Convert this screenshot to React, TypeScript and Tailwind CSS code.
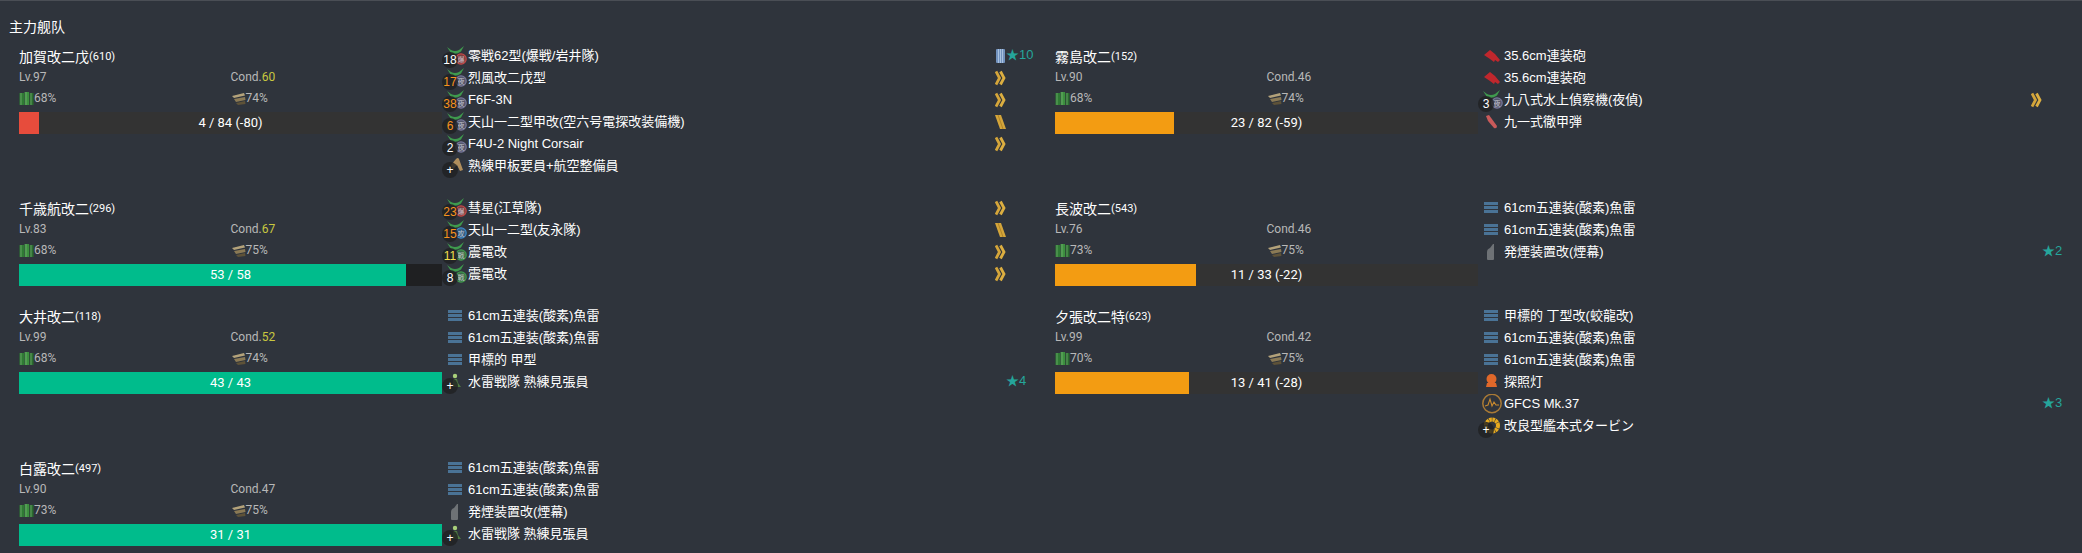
const FONT = "font-['Roboto','Noto_Sans_CJK_JP',sans-serif]";

type IconKind =
  | "bomber"
  | "night"
  | "attack"
  | "fighter"
  | "crew"
  | "torpedo"
  | "lookout"
  | "smoke"
  | "gun"
  | "shell"
  | "light"
  | "radar"
  | "turbine";

type Prof = "blue" | "chevron" | "slash";

type Slot = {
  icon: IconKind;
  name: string;
  badge?: string;
  badgeColor?: string;
  prof?: Prof;
  star?: number;
};

type Ship = {
  name: string;
  id: number;
  lv: number;
  cond: number;
  condHigh?: boolean;
  fuel: number;
  ammo: number;
  hp: number;
  maxHp: number;
  dark?: boolean;
  slots: Slot[];
};

const ORANGE = "#f7931e";

const torpedo61: Slot = { icon: "torpedo", name: "61cm五連装(酸素)魚雷" };
const smoke: Slot = { icon: "smoke", name: "発煙装置改(煙幕)" };
const lookout: Slot = { icon: "lookout", name: "水雷戦隊 熟練見張員", badge: "+" };

const ships: Ship[] = [
  {
    name: "加賀改二戊", id: 610, lv: 97, cond: 60, condHigh: true, fuel: 68, ammo: 74, hp: 4, maxHp: 84,
    slots: [
      { icon: "bomber", name: "零戦62型(爆戦/岩井隊)", badge: "18", prof: "blue", star: 10 },
      { icon: "night", name: "烈風改二戊型", badge: "17", badgeColor: ORANGE, prof: "chevron" },
      { icon: "night", name: "F6F-3N", badge: "38", badgeColor: ORANGE, prof: "chevron" },
      { icon: "night", name: "天山一二型甲改(空六号電探改装備機)", badge: "6", badgeColor: ORANGE, prof: "slash" },
      { icon: "night", name: "F4U-2 Night Corsair", badge: "2", prof: "chevron" },
      { icon: "crew", name: "熟練甲板要員+航空整備員", badge: "+" },
    ],
  },
  {
    name: "霧島改二", id: 152, lv: 90, cond: 46, fuel: 68, ammo: 74, hp: 23, maxHp: 82,
    slots: [
      { icon: "gun", name: "35.6cm連装砲" },
      { icon: "gun", name: "35.6cm連装砲" },
      { icon: "night", name: "九八式水上偵察機(夜偵)", badge: "3", prof: "chevron" },
      { icon: "shell", name: "九一式徹甲弾" },
    ],
  },
  {
    name: "千歳航改二", id: 296, lv: 83, cond: 67, condHigh: true, fuel: 68, ammo: 75, hp: 53, maxHp: 58, dark: true,
    slots: [
      { icon: "bomber", name: "彗星(江草隊)", badge: "23", badgeColor: ORANGE, prof: "chevron" },
      { icon: "attack", name: "天山一二型(友永隊)", badge: "15", badgeColor: ORANGE, prof: "slash" },
      { icon: "fighter", name: "震電改", badge: "11", badgeColor: "#f4e04d", prof: "chevron" },
      { icon: "fighter", name: "震電改", badge: "8", prof: "chevron" },
    ],
  },
  {
    name: "長波改二", id: 543, lv: 76, cond: 46, fuel: 73, ammo: 75, hp: 11, maxHp: 33,
    slots: [torpedo61, torpedo61, { ...smoke, star: 2 }],
  },
  {
    name: "大井改二", id: 118, lv: 99, cond: 52, condHigh: true, fuel: 68, ammo: 74, hp: 43, maxHp: 43,
    slots: [torpedo61, torpedo61, { icon: "torpedo", name: "甲標的 甲型" }, { ...lookout, star: 4 }],
  },
  {
    name: "夕張改二特", id: 623, lv: 99, cond: 42, fuel: 70, ammo: 75, hp: 13, maxHp: 41,
    slots: [
      { icon: "torpedo", name: "甲標的 丁型改(蛟龍改)" },
      torpedo61,
      torpedo61,
      { icon: "light", name: "探照灯" },
      { icon: "radar", name: "GFCS Mk.37", star: 3 },
      { icon: "turbine", name: "改良型艦本式タービン", badge: "+" },
    ],
  },
  {
    name: "白露改二", id: 497, lv: 90, cond: 47, fuel: 73, ammo: 75, hp: 31, maxHp: 31,
    slots: [torpedo61, torpedo61, smoke, lookout],
  },
];

function PlaneBadge({ color, label }: { color: string; label: string }) {
  return (
    <svg width="22" height="22" viewBox="0 0 22 22" className="block">
      <path d="M2 1 L6 4 Q10 6 14 4 L19 0 L16 5.5 Q11 9 6 7 Z" fill="#3f9a4e" />
      <circle cx="16" cy="13" r="5.2" fill={color} fillOpacity="0.5" stroke={color} strokeWidth="1.2" />
      <text x="16" y="16" textAnchor="middle" fontSize="7" fill="#e8e8f0" fillOpacity="0.75">
        {label}
      </text>
    </svg>
  );
}

function SlotIcon({ kind }: { kind: IconKind }) {
  if (kind === "bomber") return <PlaneBadge color="#c44848" label="爆" />;
  if (kind === "night") return <PlaneBadge color="#77779a" label="夜" />;
  if (kind === "attack") return <PlaneBadge color="#3d8ac9" label="攻" />;
  if (kind === "fighter") return <PlaneBadge color="#3f9a4e" label="戦" />;
  return (
    <svg width="22" height="22" viewBox="0 0 22 22" className="block">
      {kind === "crew" && <path d="M6 9 L11 3 Q13 1 14 3 L18 14 L15 15 L12 9 L8 13 Z" fill="#b08e5c" />}
      {kind === "torpedo" && (
        <g fill="#4a7396">
          <rect x="3" y="4" width="14" height="3" />
          <rect x="3" y="8" width="14" height="3" />
          <rect x="3" y="12" width="14" height="3" />
        </g>
      )}
      {kind === "lookout" && (
        <g fill="#4f7a42">
          <circle cx="10" cy="4" r="2.2" fill="#a8cf7a" />
          <path d="M8 7 L12 7 L13 11 L16 15 L8 15 Z" />
        </g>
      )}
      {kind === "smoke" && (
        <path d="M6 10 Q6 7 9 6 L12 2 L13 2 L13 17 Q13 18 12 18 L7 18 Q6 18 6 17 Z" fill="#6e7276" />
      )}
      {kind === "gun" && <path d="M3 9 L9 4 L14 8 L19 14 L17 16 L14 14 L13 16 L9 13 Z" fill="#c0272d" />}
      {kind === "shell" && <path d="M5 4 L8 3 L16 14 Q16 17 13 16 L7 9 Z" fill="#c95a5a" />}
      {kind === "light" && (
        <g fill="#e0682a">
          <circle cx="10.5" cy="7" r="5" />
          <path d="M6 11 L15 11 L16 15 L5 15 Z" />
        </g>
      )}
      {kind === "radar" && (
        <g fill="none">
          <circle cx="11" cy="9.5" r="9.2" stroke="#a97a36" strokeWidth="1.5" />
          <path d="M4 12 L7 11 L9 5 L11 12 L13 8 L15 11 L18 11" stroke="#c98a2e" strokeWidth="1.1" />
        </g>
      )}
      {kind === "turbine" && (
        <circle cx="11" cy="9.5" r="6" fill="none" stroke="#e6a91f" strokeWidth="4" strokeDasharray="2.6 0.5" />
      )}
    </svg>
  );
}

function ProfIcon({ kind }: { kind: Prof }) {
  if (kind === "blue") {
    return (
      <svg width="11" height="16" viewBox="0 0 11 16">
        <rect x="1" y="1" width="9" height="14" fill="#7393bf" rx="1" />
        <path d="M3.5 1 V15 M5.5 1 V15 M7.5 1 V15" stroke="#a9c2df" strokeWidth="1" />
      </svg>
    );
  }
  if (kind === "slash") {
    return (
      <svg width="11" height="16" viewBox="0 0 11 16">
        <path d="M0 1 L6 1 L11 15 L5 15 Z" fill="#d4a53a" />
        <path d="M3 1 L8 15" stroke="#b08428" strokeWidth="1" />
      </svg>
    );
  }
  return (
    <svg width="11" height="16" viewBox="0 0 11 16">
      <path d="M1 1.5 L4.5 8 L1 14.5" fill="none" stroke="#d4a53a" strokeWidth="2.8" />
      <path d="M5.5 1.5 L9 8 L5.5 14.5" fill="none" stroke="#dcae40" strokeWidth="2.8" />
    </svg>
  );
}

function SlotRow({ slot }: { slot: Slot }) {
  return (
    <div className="flex h-[22px] items-center font-['Liberation_Sans','Noto_Sans_CJK_JP',sans-serif] text-[13px] text-white">
      <div className="relative h-[22px] w-[23px] shrink-0 pt-[1px]">
        <SlotIcon kind={slot.icon} />
        {slot.badge && (
          <span
            className="absolute left-[-3px] top-[7px] flex h-[16px] w-[16px] items-center justify-center rounded-full bg-[#1f2022]/80 text-[12px] leading-none"
            style={{ color: slot.badgeColor ?? "#ffffff" }}
          >
            {slot.badge}
          </span>
        )}
      </div>
      <span className="min-w-0 flex-1 whitespace-nowrap">{slot.name}</span>
      <div className="flex w-[11px] shrink-0 justify-center">{slot.prof && <ProfIcon kind={slot.prof} />}</div>
      <span className="w-[27px] shrink-0 -translate-y-[2px] text-[13px] leading-none text-[#25a59b]">
        {slot.star !== undefined && `★${slot.star}`}
      </span>
    </div>
  );
}

function FuelIcon() {
  return (
    <svg width="15" height="15" viewBox="0 0 15 15" className="shrink-0">
      <rect x="0.5" y="2" width="4.5" height="12" fill="#2f7a34" />
      <rect x="5.5" y="1" width="4.5" height="13" fill="#3d8f3f" />
      <rect x="10.5" y="2" width="4" height="12" fill="#2a6b2e" />
      <path d="M2 2 V14 M7 1 V14 M12 2 V14" stroke="#7bb77a" strokeWidth="0.7" />
    </svg>
  );
}

function AmmoIcon() {
  return (
    <svg width="15" height="15" viewBox="0 0 15 15" className="shrink-0">
      <path d="M1 5 L13 2 L14 4.5 L3 7 Z" fill="#b3a27a" />
      <path d="M3 8 L14 6 L14.5 9 L5 11 Z" fill="#8b7a55" />
      <path d="M5 12 L14 10 L14.5 13 L7 14 Z" fill="#5e5238" />
    </svg>
  );
}

function HpBar({ ship }: { ship: Ship }) {
  const diff = ship.hp - ship.maxHp;
  const ratio = ship.hp / ship.maxHp;
  const fill = ratio <= 0.25 ? "bg-[#e74c3c]" : ratio <= 0.5 ? "bg-[#f39c12]" : "bg-[#00bc8c]";
  return (
    <div className={`relative mt-[8px] h-[22px] w-full ${ship.dark ? "bg-[#1f2022]" : "bg-[#333333]"}`}>
      <div className={`h-full ${fill}`} style={{ width: `${ratio * 100}%` }} />
      <div className="absolute inset-0 flex items-center justify-center text-[13px] text-white">
        {ship.hp} / {ship.maxHp}
        {ratio <= 0.5 && ` (${diff})`}
      </div>
    </div>
  );
}

function ShipCell({ ship }: { ship: Ship }) {
  return (
    <div className="flex pb-5">
      <div className="h-[88px] w-[423px] shrink-0 pt-[1px]">
        <div className="flex h-[22px] items-center text-[14px] text-white">
          {ship.name}
          <span className="text-[11px]">({ship.id})</span>
        </div>
        <div className="grid h-[13px] grid-cols-2 items-center text-[12px] text-[#b8b8b8]">
          <span>Lv.{ship.lv}</span>
          <span>
            Cond.<span className={ship.condHigh ? "text-[#c9c83f]" : ""}>{ship.cond}</span>
          </span>
        </div>
        <div className="mt-[8px] grid h-[15px] grid-cols-2 items-center text-[12px] text-[#b8b8b8]">
          <span className="flex items-center">
            <FuelIcon />
            {ship.fuel}%
          </span>
          <span className="flex items-center">
            <AmmoIcon />
            {ship.ammo}%
          </span>
        </div>
        <HpBar ship={ship} />
      </div>
      <div className="ml-[3px] w-[588px] shrink-0">
        {ship.slots.map((slot, i) => (
          <SlotRow key={i} slot={slot} />
        ))}
      </div>
    </div>
  );
}

export default function App() {
  return (
    <div className={`h-[553px] w-[2082px] overflow-hidden border-t border-[#4a4e55] bg-[#2f343c] ${FONT}`}>
      <div className="h-[44px] pl-[9px] pt-[16px] text-[14px] leading-5 text-white">主力舰队</div>
      <div className="grid grid-cols-[1036px_1fr] pl-[19px]">
        {ships.map((ship) => (
          <ShipCell key={ship.id} ship={ship} />
        ))}
      </div>
    </div>
  );
}
